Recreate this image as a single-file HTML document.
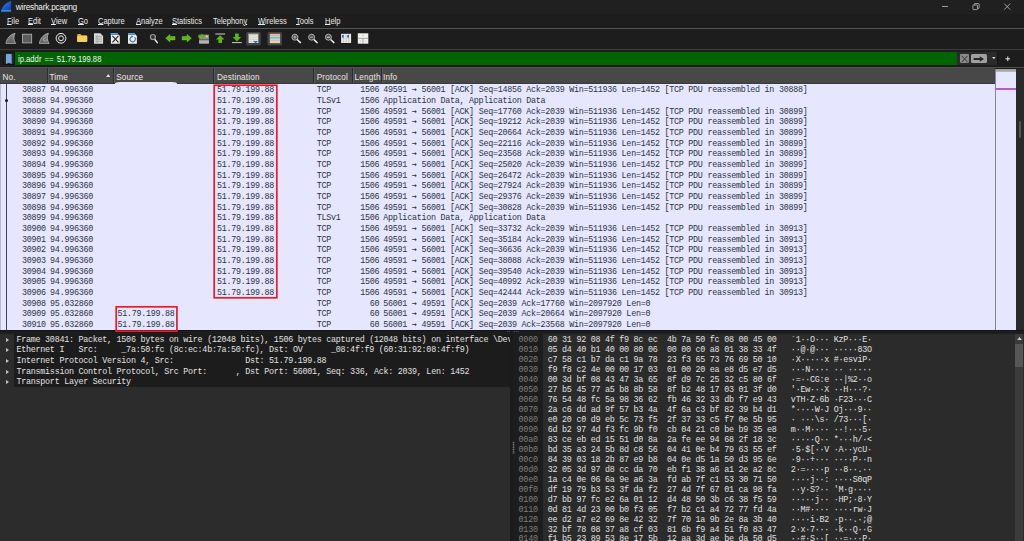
<!DOCTYPE html><html lang="en"><head><meta charset="utf-8"><title>wireshark.pcapng</title><style>
*{box-sizing:border-box;margin:0;padding:0}
html,body{width:1024px;height:541px;overflow:hidden;background:#1d1d1d}
body{position:relative;font-family:"Liberation Sans",sans-serif;font-size:8px;color:#e6e6e6}
.abs{position:absolute}
.m{font-family:"Liberation Mono",monospace;font-size:8.4px;letter-spacing:-0.2599px;white-space:pre}
#title{left:0;top:0;width:1024px;height:14px;background:#202020}
#title .t{left:15.8px;top:2.2px;font-size:8.3px;color:#f2f2f2;letter-spacing:-0.24px}
  .mi{top:17.2px;font-size:8.2px;color:#ececec;white-space:pre;transform:scaleX(0.915);transform-origin:0 0}
.mi u{text-decoration-thickness:0.6px;text-underline-offset:0.4px}
.hl{left:0;width:1024px;height:1px}
#hdr{left:0;top:67px;width:995px;height:16.6px;background:linear-gradient(#505050,#505050 0.9px,#484848 1.3px,#484848 15.4px,#3b3b3b 16px)}
.ht{top:5.7px;font-size:8.2px;letter-spacing:0.17px;color:#ebe9e0;white-space:pre}
.hs{top:1px;width:1px;height:15px;background:#2c2c2c;box-shadow:1px 0 0 #595959}
#plist{left:0;top:83.6px;width:995px;height:246.1px;background:#e7e6ff;overflow:hidden}
.r{left:0;width:995px;height:10.667px;color:#283442}
.r span{position:absolute;top:0;line-height:10.667px}
#detail{left:0;top:333.6px;width:510.3px;height:207.4px;background:#2c2c2c;overflow:hidden}
.dr{left:14px;width:500px;height:10.667px;color:#e2e2e2}
.dr span{position:absolute;left:2.5px;top:0;line-height:10.667px}
.tri{left:5.9px;width:0;height:0;border-left:3.4px solid #c4c4c4;border-top:2.7px solid transparent;border-bottom:2.7px solid transparent}
#bytes{left:513px;top:333.6px;width:511px;height:207.4px;background:#2b2b2b;overflow:hidden}
.br{left:0;width:503px;height:10px;color:#e0e0e0}
.br span{position:absolute;top:0;line-height:10px}
.r i{font-style:normal;font-family:"DejaVu Sans Mono","Liberation Mono",monospace;font-size:8px;display:inline-block;width:4.766px;letter-spacing:0;font-weight:bold}
.redbox{border:1.7px solid #ea1a26}
</style></head><body>
<div id="title" class="abs">
<svg class="abs" style="left:1.2px;top:1.2px" width="10.4" height="10.4" viewBox="0 -0.5 20 20"><defs><linearGradient id="fg" x1="0" y1="0" x2="1" y2="1"><stop offset="0" stop-color="#2f80ee"/><stop offset="1" stop-color="#0b3da6"/></linearGradient></defs><path d="M0 19.5C2.5 10 9 2 19.8-.5C19.2 6 19 13 19.6 19.5Z" fill="url(#fg)"/><path d="M0 19.5c.3-1 .6-1.700 .9-2.400H19.400l.2 2.400Z" fill="#4b9bf3"/></svg>
<div class="abs t">wireshark.pcapng</div>
<svg class="abs" style="left:940px;top:0" width="84" height="14" viewBox="0 0 84 14"><g stroke="#dcdcdc" stroke-width="0.65" fill="none"><path d="M2 6.5h6"/><rect x="32.9" y="5" width="4.6" height="4.6" rx="0.8"/><path d="M34.3 5V4.2q0-.6.6-.6h3.6q.6 0 .6.6v3.6q0 .6-.6.6h-.9"/><path d="M64.2 3.6l6 6M70.2 3.6l-6 6"/></g></svg>
</div>
<div class="abs mi" id="m_File" style="left:6.8px"><u>F</u>ile</div>
<div class="abs mi" id="m_Edit" style="left:28px"><u>E</u>dit</div>
<div class="abs mi" id="m_View" style="left:51px"><u>V</u>iew</div>
<div class="abs mi" id="m_Go" style="left:78px"><u>G</u>o</div>
<div class="abs mi" id="m_Capture" style="left:98px"><u>C</u>apture</div>
<div class="abs mi" id="m_Analyze" style="left:135.5px"><u>A</u>nalyze</div>
<div class="abs mi" id="m_Statistics" style="left:172px"><u>S</u>tatistics</div>
<div class="abs mi" id="m_Telephony" style="left:212.5px">Telephon<u>y</u></div>
<div class="abs mi" id="m_Wireless" style="left:258px"><u>W</u>ireless</div>
<div class="abs mi" id="m_Tools" style="left:296px"><u>T</u>ools</div>
<div class="abs mi" id="m_Help" style="left:324.7px"><u>H</u>elp</div>
<div class="abs hl" style="top:28px;background:#545454"></div>
<div class="abs hl" style="top:49.2px;background:#3c3c3c"></div>
<div id="tb" class="abs" style="left:0;top:29px;width:1024px;height:20px">
<svg class="abs" style="left:0;top:0" width="400" height="21" viewBox="0 29 400 21"><defs><linearGradient id="fing" x1="0" y1="0" x2="0" y2="1"><stop offset="0" stop-color="#8a8a8a"/><stop offset="1" stop-color="#5c5c5c"/></linearGradient></defs><path d="M15 33.3C10.4 34.4 6.9 38 5.9 43.4H15.7C13.5 40.4 13.5 36.4 15 33.3Z" fill="url(#fing)" stroke="#b2b2b2" stroke-width=".8"/><rect x="22.4" y="34.2" width="9.3" height="8.7" fill="#5c5c5c" stroke="#b6b6b6" stroke-width=".8"/><path d="M15 33.3C10.4 34.4 6.9 38 5.9 43.4H15.7C13.5 40.4 13.5 36.4 15 33.3Z" transform="translate(33.4 0)" fill="url(#fing)" stroke="#b2b2b2" stroke-width=".8"/><path d="M46.9 39.2a1.7 1.7 0 1 1-1.2-1.2" fill="none" stroke="#bdbdbd" stroke-width=".8"/><circle cx="61" cy="38.3" r="4.9" fill="#2a2a2a" stroke="#ececec" stroke-width="1"/><circle cx="61" cy="38.3" r="2.4" fill="#1e1e1e" stroke="#ececec" stroke-width=".95"/><path d="M77.2 35q0-.9.9-.9h2.4l1 1.1h4.8q.9 0 .9.9v5.1q0 .9-.9.9h-8.2q-.9 0-.9-.9Z" fill="#e9aa22"/><rect x="77.2" y="35.9" width="10" height="6.2" rx=".8" fill="#f6cf5e"/><path d="M94 33.3h6.3l2.8 2.8v7.6H94Z" fill="#d9d9d9"/><path d="M95.3 36.4h6.6M95.3 38.1h6.6M95.3 39.8h6.6M95.3 41.5h6.6M97 35v8" stroke="#8c8c8c" stroke-width=".55" fill="none"/><path d="M110.9 33.3h6.2l2.7 2.8v7.6h-8.9Z" fill="#efeee2"/><path d="M110.9 33.3h6.2l1 1v.8h-7.2Z" fill="#3b95e2"/><path d="M112.4 35.8l6 6.6M118.4 35.8l-6 6.6" stroke="#20242c" stroke-width="1.1"/><path d="M128 33.3h6.2l2.7 2.8v7.6H128Z" fill="#efeee2"/><path d="M128 33.3h6.2l1 1v.8H128Z" fill="#3b95e2"/><path d="M134.6 37.2a2.7 2.7 0 1 1-2.6-.7" fill="none" stroke="#3b74c4" stroke-width="1.15"/><path d="M131.4 35.2l2 1.3-2 1.5Z" fill="#3b74c4"/><path d="M154.6 39.2l2.7 3.4" stroke="#ececec" stroke-width="1.5" stroke-linecap="round"/><circle cx="152.9" cy="37" r="2.5" fill="#333" stroke="#9c9c9c" stroke-width="1.2"/><path d="M165.7 38.2L170 34.4V36.5H175V39.9H170V42Z" fill="#5db616" stroke="#93d653" stroke-width=".4"/><path d="M191.4 38.2L187.1 34.4V36.5H182.1V39.9H187.1V42Z" fill="#5db616" stroke="#93d653" stroke-width=".4"/><rect x="199.2" y="34.6" width="9.7" height="8.9" fill="#8f8f8f"/><rect x="199.2" y="40.2" width="9.7" height="3.3" fill="#b4b4b4"/><rect x="199.2" y="39.3" width="9.7" height=".9" fill="#555"/><path d="M198.2 35.3h3.3v-1.7l3.3 2.8-3.3 2.8v-1.7h-3.3Z" fill="#5db616"/><circle cx="206.9" cy="36.5" r="1" fill="#f2e24e"/><rect x="215.3" y="33.5" width="9.8" height="1" fill="#cfcfcf"/><path d="M220.2 35.3L224.5 39.6H222V43H218.4V39.6H215.9Z" fill="#5db616"/><rect x="232" y="42.1" width="9.8" height="1" fill="#cfcfcf"/><path d="M236.9 41.4L241.2 37.1H238.7V33.6H235.1V37.1H232.6Z" fill="#5db616"/><rect x="246.1" y="31.9" width="14.7" height="13.7" rx="1.6" fill="#434343"/><rect x="248.6" y="33.8" width="9.7" height="9.2" fill="#e6e6dc"/><rect x="248.6" y="33.8" width="9.7" height="1.3" fill="#c4c4bc"/><path d="M248.6 37.2h9.7M248.6 39.4h9.7M248.6 41.4h9.7" stroke="#c2c2ba" stroke-width=".5"/><path d="M253 41h5.2l-2.6 2.2Z" fill="#2868d2"/><rect x="267.4" y="31.9" width="14.6" height="13.7" rx="1.6" fill="#434343"/><rect x="269.8" y="33.8" width="10.3" height="2" fill="#f0b6c0"/><rect x="269.8" y="35.8" width="10.3" height="1.7" fill="#b6e6a2"/><rect x="269.8" y="37.5" width="10.3" height="1.6" fill="#a2c6f0"/><rect x="269.8" y="39.1" width="10.3" height="1.7" fill="#d4dcf4"/><rect x="269.8" y="40.8" width="10.3" height="2.4" fill="#e8d898"/><path d="M297.09999999999997 39.5l3.3 3.1" stroke="#ececec" stroke-width="1.5" stroke-linecap="round"/><circle cx="294.9" cy="37.2" r="3" fill="#4a4a4a" stroke="#bdbdbd" stroke-width=".9"/><path d="M293.4 37.2h3M294.9 35.7v3" stroke="#d8d8d8" stroke-width=".7"/><path d="M313.8 39.5l3.3 3.1" stroke="#ececec" stroke-width="1.5" stroke-linecap="round"/><circle cx="311.6" cy="37.2" r="3" fill="#4a4a4a" stroke="#bdbdbd" stroke-width=".9"/><path d="M310.1 37.2h3" stroke="#d8d8d8" stroke-width=".7"/><path d="M330.59999999999997 39.5l3.3 3.1" stroke="#ececec" stroke-width="1.5" stroke-linecap="round"/><circle cx="328.4" cy="37.2" r="3" fill="#4a4a4a" stroke="#bdbdbd" stroke-width=".9"/><path d="M326.79999999999995 37.2h3.2" stroke="#d8d8d8" stroke-width="1.1"/><rect x="341.1" y="33.8" width="10" height="9.2" fill="#e9e9e1"/><path d="M346.1 33.8v9.2M343.6 33.8v9.2M348.7 33.8v9.2" stroke="#a8a8a0" stroke-width=".5"/><rect x="342" y="35" width="1.7" height="2.7" fill="#2868d2"/><rect x="347.3" y="35" width="1.7" height="2.7" fill="#2868d2"/><rect x="357.8" y="33.3" width="10.5" height="10.4" fill="#f0f0ee"/><path d="M357.8 38.4h10.5M363 38.4v5.3" stroke="#8c8c8c" stroke-width=".7"/><path d="M362 35.6h2M360 41h1.2M365 41h1.2" stroke="#aaa" stroke-width=".6"/></svg>
</div>
<div class="abs" style="left:3px;top:51.5px;width:995px;height:13.8px;background:#131313;border-radius:1.5px"></div>
<div class="abs" style="left:4px;top:52.6px;width:10.2px;height:11.6px;background:#262626;border-radius:1.2px"></div>
<div class="abs" style="left:15px;top:52.4px;width:942px;height:12.4px;background:#006400"></div>
<svg class="abs" style="left:6px;top:53.7px" width="5.7" height="10" viewBox="0 0 5.4 9.6" preserveAspectRatio="none"><path d="M0 .6Q0 0 .6 0H4.8Q5.4 0 5.4.6V9.6L2.7 8.3 0 9.6Z" fill="#76a6e2"/></svg>
<div class="abs" id="ftext" style="left:17.5px;top:54.3px;font-size:8.4px;color:#f4f4f4;white-space:pre;word-spacing:1.1px;transform:scaleX(0.915);transform-origin:0 0">ip.addr == 51.79.199.88</div>
<div class="abs" style="left:957px;top:52.4px;width:40.2px;height:12.2px;background:#2b2b2b;border-radius:0 1.2px 1.2px 0"></div>
<div class="abs" style="left:959.6px;top:54.2px;width:9.2px;height:8.8px;background:#8a8a8a;border-radius:1px"></div>
<svg class="abs" style="left:959.6px;top:53.6px" width="9.2" height="10" viewBox="0 0 9.2 10"><path d="M1.6 1.8l6 6.4M7.6 1.8l-6 6.4" stroke="#2a2a2a" stroke-width="0.9"/></svg>
<div class="abs" style="left:971px;top:54.2px;width:15.6px;height:8.8px;background:#a0a0a0;border-radius:1.5px"></div>
<svg class="abs" style="left:971px;top:53.6px" width="15.6" height="10" viewBox="0 0 15.6 10"><path d="M2.6 4h6.2V2.2L13 5 8.8 7.8V6H2.6Z" fill="#262626"/></svg>
<svg class="abs" style="left:992.2px;top:57.4px" width="3.6" height="2.4" viewBox="0 0 5 3"><path d="M0 0h5L2.5 3Z" fill="#cfcfcf"/></svg>
<svg class="abs" style="left:1004.6px;top:56px" width="5.6" height="5.6" viewBox="0 0 7 7"><path d="M3.5 .6v5.8M.6 3.5h5.8" stroke="#f0f0f0" stroke-width="1.2"/></svg>
<div class="abs hl" style="top:67.2px;background:#4e4e4e"></div>
<div id="hdr" class="abs">
<div class="abs ht" id="h_No" style="left:2.4px">No.</div>
<div class="abs ht" id="h_Time" style="left:49.5px">Time</div>
<div class="abs ht" id="h_Source" style="left:116.2px">Source</div>
<div class="abs ht" id="h_Destination" style="left:216.9px">Destination</div>
<div class="abs ht" id="h_Protocol" style="left:316.7px">Protocol</div>
<div class="abs ht" id="h_Length" style="left:354.6px">Length</div>
<div class="abs ht" id="h_Info" style="left:383px">Info</div>
<div class="abs hs" style="left:46.6px"></div>
<div class="abs hs" style="left:113.2px"></div>
<div class="abs hs" style="left:213.4px"></div>
<div class="abs hs" style="left:313.3px"></div>
<div class="abs hs" style="left:351.8px"></div>
<div class="abs hs" style="left:380.6px"></div>
<svg class="abs" style="left:106.3px;top:7px" width="4.4" height="3.4" viewBox="0 0 4.4 3.4"><path d="M0 3.4L2.2 0 4.4 3.4Z" fill="#e8e8e8"/></svg>
</div>
<div id="plist" class="abs">
<div class="abs" style="left:0;top:0;width:1px;height:246px;background:#b9b8d0"></div>
<div class="abs" style="left:5.8px;top:0;width:0.8px;height:246px;background:#44444f"></div>
<div class="abs" style="left:4.7px;top:15.2px;width:3.2px;height:3.2px;border-radius:50%;background:#15151c"></div>
<div class="abs r m" style="top:1.65px"><span style="left:21.97px">30887</span><span style="left:50.1px">94.996360</span><span style="left:216.9px">51.79.199.88</span><span style="left:316.7px">TCP</span><span style="left:360.14px">1506</span><span style="left:383.3px">49591 <i>→</i> 56001 [ACK] Seq=14856 Ack=2039 Win=511936 Len=1452 [TCP PDU reassembled in 30888]</span></div>
<div class="abs r m" style="top:12.32px"><span style="left:21.97px">30888</span><span style="left:50.1px">94.996360</span><span style="left:216.9px">51.79.199.88</span><span style="left:316.7px">TLSv1</span><span style="left:360.14px">1506</span><span style="left:383.3px">Application Data, Application Data</span></div>
<div class="abs r m" style="top:22.98px"><span style="left:21.97px">30889</span><span style="left:50.1px">94.996360</span><span style="left:216.9px">51.79.199.88</span><span style="left:316.7px">TCP</span><span style="left:360.14px">1506</span><span style="left:383.3px">49591 <i>→</i> 56001 [ACK] Seq=17760 Ack=2039 Win=511936 Len=1452 [TCP PDU reassembled in 30899]</span></div>
<div class="abs r m" style="top:33.65px"><span style="left:21.97px">30890</span><span style="left:50.1px">94.996360</span><span style="left:216.9px">51.79.199.88</span><span style="left:316.7px">TCP</span><span style="left:360.14px">1506</span><span style="left:383.3px">49591 <i>→</i> 56001 [ACK] Seq=19212 Ack=2039 Win=511936 Len=1452 [TCP PDU reassembled in 30899]</span></div>
<div class="abs r m" style="top:44.32px"><span style="left:21.97px">30891</span><span style="left:50.1px">94.996360</span><span style="left:216.9px">51.79.199.88</span><span style="left:316.7px">TCP</span><span style="left:360.14px">1506</span><span style="left:383.3px">49591 <i>→</i> 56001 [ACK] Seq=20664 Ack=2039 Win=511936 Len=1452 [TCP PDU reassembled in 30899]</span></div>
<div class="abs r m" style="top:54.99px"><span style="left:21.97px">30892</span><span style="left:50.1px">94.996360</span><span style="left:216.9px">51.79.199.88</span><span style="left:316.7px">TCP</span><span style="left:360.14px">1506</span><span style="left:383.3px">49591 <i>→</i> 56001 [ACK] Seq=22116 Ack=2039 Win=511936 Len=1452 [TCP PDU reassembled in 30899]</span></div>
<div class="abs r m" style="top:65.65px"><span style="left:21.97px">30893</span><span style="left:50.1px">94.996360</span><span style="left:216.9px">51.79.199.88</span><span style="left:316.7px">TCP</span><span style="left:360.14px">1506</span><span style="left:383.3px">49591 <i>→</i> 56001 [ACK] Seq=23568 Ack=2039 Win=511936 Len=1452 [TCP PDU reassembled in 30899]</span></div>
<div class="abs r m" style="top:76.32px"><span style="left:21.97px">30894</span><span style="left:50.1px">94.996360</span><span style="left:216.9px">51.79.199.88</span><span style="left:316.7px">TCP</span><span style="left:360.14px">1506</span><span style="left:383.3px">49591 <i>→</i> 56001 [ACK] Seq=25020 Ack=2039 Win=511936 Len=1452 [TCP PDU reassembled in 30899]</span></div>
<div class="abs r m" style="top:86.99px"><span style="left:21.97px">30895</span><span style="left:50.1px">94.996360</span><span style="left:216.9px">51.79.199.88</span><span style="left:316.7px">TCP</span><span style="left:360.14px">1506</span><span style="left:383.3px">49591 <i>→</i> 56001 [ACK] Seq=26472 Ack=2039 Win=511936 Len=1452 [TCP PDU reassembled in 30899]</span></div>
<div class="abs r m" style="top:97.65px"><span style="left:21.97px">30896</span><span style="left:50.1px">94.996360</span><span style="left:216.9px">51.79.199.88</span><span style="left:316.7px">TCP</span><span style="left:360.14px">1506</span><span style="left:383.3px">49591 <i>→</i> 56001 [ACK] Seq=27924 Ack=2039 Win=511936 Len=1452 [TCP PDU reassembled in 30899]</span></div>
<div class="abs r m" style="top:108.32px"><span style="left:21.97px">30897</span><span style="left:50.1px">94.996360</span><span style="left:216.9px">51.79.199.88</span><span style="left:316.7px">TCP</span><span style="left:360.14px">1506</span><span style="left:383.3px">49591 <i>→</i> 56001 [ACK] Seq=29376 Ack=2039 Win=511936 Len=1452 [TCP PDU reassembled in 30899]</span></div>
<div class="abs r m" style="top:118.99px"><span style="left:21.97px">30898</span><span style="left:50.1px">94.996360</span><span style="left:216.9px">51.79.199.88</span><span style="left:316.7px">TCP</span><span style="left:360.14px">1506</span><span style="left:383.3px">49591 <i>→</i> 56001 [ACK] Seq=30828 Ack=2039 Win=511936 Len=1452 [TCP PDU reassembled in 30899]</span></div>
<div class="abs r m" style="top:129.65px"><span style="left:21.97px">30899</span><span style="left:50.1px">94.996360</span><span style="left:216.9px">51.79.199.88</span><span style="left:316.7px">TLSv1</span><span style="left:360.14px">1506</span><span style="left:383.3px">Application Data, Application Data</span></div>
<div class="abs r m" style="top:140.32px"><span style="left:21.97px">30900</span><span style="left:50.1px">94.996360</span><span style="left:216.9px">51.79.199.88</span><span style="left:316.7px">TCP</span><span style="left:360.14px">1506</span><span style="left:383.3px">49591 <i>→</i> 56001 [ACK] Seq=33732 Ack=2039 Win=511936 Len=1452 [TCP PDU reassembled in 30913]</span></div>
<div class="abs r m" style="top:150.99px"><span style="left:21.97px">30901</span><span style="left:50.1px">94.996360</span><span style="left:216.9px">51.79.199.88</span><span style="left:316.7px">TCP</span><span style="left:360.14px">1506</span><span style="left:383.3px">49591 <i>→</i> 56001 [ACK] Seq=35184 Ack=2039 Win=511936 Len=1452 [TCP PDU reassembled in 30913]</span></div>
<div class="abs r m" style="top:161.66px"><span style="left:21.97px">30902</span><span style="left:50.1px">94.996360</span><span style="left:216.9px">51.79.199.88</span><span style="left:316.7px">TCP</span><span style="left:360.14px">1506</span><span style="left:383.3px">49591 <i>→</i> 56001 [ACK] Seq=36636 Ack=2039 Win=511936 Len=1452 [TCP PDU reassembled in 30913]</span></div>
<div class="abs r m" style="top:172.32px"><span style="left:21.97px">30903</span><span style="left:50.1px">94.996360</span><span style="left:216.9px">51.79.199.88</span><span style="left:316.7px">TCP</span><span style="left:360.14px">1506</span><span style="left:383.3px">49591 <i>→</i> 56001 [ACK] Seq=38088 Ack=2039 Win=511936 Len=1452 [TCP PDU reassembled in 30913]</span></div>
<div class="abs r m" style="top:182.99px"><span style="left:21.97px">30904</span><span style="left:50.1px">94.996360</span><span style="left:216.9px">51.79.199.88</span><span style="left:316.7px">TCP</span><span style="left:360.14px">1506</span><span style="left:383.3px">49591 <i>→</i> 56001 [ACK] Seq=39540 Ack=2039 Win=511936 Len=1452 [TCP PDU reassembled in 30913]</span></div>
<div class="abs r m" style="top:193.66px"><span style="left:21.97px">30905</span><span style="left:50.1px">94.996360</span><span style="left:216.9px">51.79.199.88</span><span style="left:316.7px">TCP</span><span style="left:360.14px">1506</span><span style="left:383.3px">49591 <i>→</i> 56001 [ACK] Seq=40992 Ack=2039 Win=511936 Len=1452 [TCP PDU reassembled in 30913]</span></div>
<div class="abs r m" style="top:204.32px"><span style="left:21.97px">30906</span><span style="left:50.1px">94.996360</span><span style="left:216.9px">51.79.199.88</span><span style="left:316.7px">TCP</span><span style="left:360.14px">1506</span><span style="left:383.3px">49591 <i>→</i> 56001 [ACK] Seq=42444 Ack=2039 Win=511936 Len=1452 [TCP PDU reassembled in 30913]</span></div>
<div class="abs r m" style="top:214.99px"><span style="left:21.97px">30908</span><span style="left:50.1px">95.032860</span><span style="left:316.7px">TCP</span><span style="left:369.67px">60</span><span style="left:383.3px">56001 <i>→</i> 49591 [ACK] Seq=2039 Ack=17760 Win=2097920 Len=0</span></div>
<div class="abs r m" style="top:225.66px"><span style="left:21.97px">30909</span><span style="left:50.1px">95.032860</span><span style="left:117.4px">51.79.199.88</span><span style="left:316.7px">TCP</span><span style="left:369.67px">60</span><span style="left:383.3px">56001 <i>→</i> 49591 [ACK] Seq=2039 Ack=20664 Win=2097920 Len=0</span></div>
<div class="abs r m" style="top:236.32px"><span style="left:21.97px">30910</span><span style="left:50.1px">95.032860</span><span style="left:117.4px">51.79.199.88</span><span style="left:316.7px">TCP</span><span style="left:369.67px">60</span><span style="left:383.3px">56001 <i>→</i> 49591 [ACK] Seq=2039 Ack=23568 Win=2097920 Len=0</span></div>
</div>
<div class="abs" style="left:995px;top:69px;width:0.8px;height:260.7px;background:#85858e"></div>
<div class="abs" style="left:995.8px;top:69.2px;width:20.1px;height:260.5px;background:linear-gradient(#9a9a9a,#bcbcbc 3px,#e7e6ff 3.5px,#e7e6ff)"></div>
<div class="abs" style="left:995.8px;top:87.9px;width:20.1px;height:2px;background:#b95cca"></div>
<div class="abs" style="left:1015.9px;top:68.5px;width:8.1px;height:261.2px;background:#2a2a2a"></div>
<div class="abs" style="left:1019px;top:121px;width:2px;height:17px;background:#555;border-radius:1px"></div>
<div class="abs" style="left:114.8px;top:82px;width:62.4px;height:3px;background:#e7e6ff;border-radius:5px 5px 0 0/1.8px 1.8px 0 0"></div>
<div class="abs" style="left:0;top:329.7px;width:1024px;height:1.3px;background:#141414"></div>
<svg class="abs" style="left:506px;top:330px" width="14" height="3" viewBox="0 0 14 3"><path d="M1.2 1.6h12" stroke="#5c5c5c" stroke-width="0.9" stroke-dasharray="1 0.75"/></svg>
<div id="detail" class="abs">
<div class="abs" style="left:14px;top:0;width:500px;height:53px;background:#1c1c1c"></div>
<div class="abs tri" style="top:4.00px"></div>
<div class="abs dr m" style="top:1.20px"><span>Frame 30841: Packet, 1506 bytes on wire (12048 bits), 1506 bytes captured (12048 bits) on interface \Dev</span></div>
<div class="abs tri" style="top:14.67px"></div>
<div class="abs dr m" style="top:11.87px"><span>Ethernet I   Src:     _7a:50:fc (8c:ec:4b:7a:50:fc), Dst: OV      _08:4f:f9 (60:31:92:08:4f:f9)</span></div>
<div class="abs tri" style="top:25.33px"></div>
<div class="abs dr m" style="top:22.53px"><span>Internet Protocol Version 4, Src:               Dst: 51.79.199.88</span></div>
<div class="abs tri" style="top:36.00px"></div>
<div class="abs dr m" style="top:33.20px"><span>Transmission Control Protocol, Src Port:      , Dst Port: 56001, Seq: 336, Ack: 2039, Len: 1452</span></div>
<div class="abs tri" style="top:46.67px"></div>
<div class="abs dr m" style="top:43.87px"><span>Transport Layer Security</span></div>
</div>
<div class="abs" style="left:510.3px;top:330.5px;width:3px;height:211px;background:#1b1b1b"></div>
<div id="bytes" class="abs">
<div class="abs" style="left:0;top:0;width:29.6px;height:208px;background:#1d1d1d"></div>
<div class="abs br m" style="top:1.60px"><span style="left:5.6px;color:#7d7d7d">0000</span><span style="left:34.8px">60 31 92 08 4f f9 8c ec  4b 7a 50 fc 08 00 45 00</span><span style="left:277.87px">`1··O··· KzP···E·</span></div>
<div class="abs br m" style="top:11.56px"><span style="left:5.6px;color:#7d7d7d">0010</span><span style="left:34.8px">05 d4 40 b1 40 00 80 06  00 00 c0 a8 01 38 33 4f</span><span style="left:277.87px">··@·@··· ·····83O</span></div>
<div class="abs br m" style="top:21.53px"><span style="left:5.6px;color:#7d7d7d">0020</span><span style="left:34.8px">c7 58 c1 b7 da c1 9a 78  23 f3 65 73 76 69 50 10</span><span style="left:277.87px">·X·····x #·esviP·</span></div>
<div class="abs br m" style="top:31.50px"><span style="left:5.6px;color:#7d7d7d">0030</span><span style="left:34.8px">f9 f8 c2 4e 00 00 17 03  01 00 20 ea e8 d5 e7 d5</span><span style="left:277.87px">···N···· ·· ·····</span></div>
<div class="abs br m" style="top:41.46px"><span style="left:5.6px;color:#7d7d7d">0040</span><span style="left:34.8px">00 3d bf 08 43 47 3a 65  8f d9 7c 25 32 c5 80 6f</span><span style="left:277.87px">·=··CG:e ··|%2··o</span></div>
<div class="abs br m" style="top:51.43px"><span style="left:5.6px;color:#7d7d7d">0050</span><span style="left:34.8px">27 b5 45 77 a5 b8 8b 58  8f b2 48 17 03 01 3f d0</span><span style="left:277.87px">'·Ew···X ··H···?·</span></div>
<div class="abs br m" style="top:61.39px"><span style="left:5.6px;color:#7d7d7d">0060</span><span style="left:34.8px">76 54 48 fc 5a 98 36 62  fb 46 32 33 db f7 e9 43</span><span style="left:277.87px">vTH·Z·6b ·F23···C</span></div>
<div class="abs br m" style="top:71.35px"><span style="left:5.6px;color:#7d7d7d">0070</span><span style="left:34.8px">2a c6 dd ad 9f 57 b3 4a  4f 6a c3 bf 82 39 b4 d1</span><span style="left:277.87px">*····W·J Oj···9··</span></div>
<div class="abs br m" style="top:81.32px"><span style="left:5.6px;color:#7d7d7d">0080</span><span style="left:34.8px">e0 20 c0 d9 eb 5c 73 f5  2f 37 33 c5 f7 0e 5b 95</span><span style="left:277.87px">· ···\s· /73···[·</span></div>
<div class="abs br m" style="top:91.28px"><span style="left:5.6px;color:#7d7d7d">0090</span><span style="left:34.8px">6d b2 97 4d f3 fc 9b f0  cb 04 21 c0 be b9 35 e8</span><span style="left:277.87px">m··M···· ··!···5·</span></div>
<div class="abs br m" style="top:101.25px"><span style="left:5.6px;color:#7d7d7d">00a0</span><span style="left:34.8px">83 ce eb ed 15 51 d0 8a  2a fe ee 94 68 2f 18 3c</span><span style="left:277.87px">·····Q·· *···h/·&lt;</span></div>
<div class="abs br m" style="top:111.21px"><span style="left:5.6px;color:#7d7d7d">00b0</span><span style="left:34.8px">bd 35 a3 24 5b 8d c8 56  04 41 0e b4 79 63 55 ef</span><span style="left:277.87px">·5·$[··V ·A··ycU·</span></div>
<div class="abs br m" style="top:121.18px"><span style="left:5.6px;color:#7d7d7d">00c0</span><span style="left:34.8px">84 39 03 18 2b 87 e9 b8  04 0e d5 1a 50 d3 95 6e</span><span style="left:277.87px">·9··+··· ····P··n</span></div>
<div class="abs br m" style="top:131.14px"><span style="left:5.6px;color:#7d7d7d">00d0</span><span style="left:34.8px">32 05 3d 97 d8 cc da 70  eb f1 38 a6 a1 2e a2 8c</span><span style="left:277.87px">2·=····p ··8··.··</span></div>
<div class="abs br m" style="top:141.11px"><span style="left:5.6px;color:#7d7d7d">00e0</span><span style="left:34.8px">1a c4 0e 06 6a 9e a6 3a  fd ab 7f c1 53 30 71 50</span><span style="left:277.87px">····j··: ····S0qP</span></div>
<div class="abs br m" style="top:151.07px"><span style="left:5.6px;color:#7d7d7d">00f0</span><span style="left:34.8px">df 19 79 b3 53 3f da f2  27 4d 7f 67 01 ca 98 fa</span><span style="left:277.87px">··y·S?·· 'M·g····</span></div>
<div class="abs br m" style="top:161.04px"><span style="left:5.6px;color:#7d7d7d">0100</span><span style="left:34.8px">d7 bb 97 fc e2 6a 01 12  d4 48 50 3b c6 38 f5 59</span><span style="left:277.87px">·····j·· ·HP;·8·Y</span></div>
<div class="abs br m" style="top:171.00px"><span style="left:5.6px;color:#7d7d7d">0110</span><span style="left:34.8px">0d 81 4d 23 00 b0 f3 05  f7 b2 c1 a4 72 77 fd 4a</span><span style="left:277.87px">··M#···· ····rw·J</span></div>
<div class="abs br m" style="top:180.97px"><span style="left:5.6px;color:#7d7d7d">0120</span><span style="left:34.8px">ee d2 a7 e2 69 8e 42 32  7f 70 1a 9b 2e 8a 3b 40</span><span style="left:277.87px">····i·B2 ·p··.·;@</span></div>
<div class="abs br m" style="top:190.94px"><span style="left:5.6px;color:#7d7d7d">0130</span><span style="left:34.8px">32 bf 78 08 37 a8 cf 03  81 6b f9 a4 51 f0 83 47</span><span style="left:277.87px">2·x·7··· ·k··Q··G</span></div>
<div class="abs br m" style="top:200.90px"><span style="left:5.6px;color:#7d7d7d">0140</span><span style="left:34.8px">f1 b5 23 89 53 8e 17 5b  12 aa 3d ae be da 50 d5</span><span style="left:277.87px">··#·S··[ ··=···P·</span></div>
<div class="abs" style="left:502.1px;top:0;width:8.4px;height:208px;background:#3b3b3b"></div>
<div class="abs" style="left:502.1px;top:10px;width:8.4px;height:23px;background:#565656"></div>
<svg class="abs" style="left:503.8px;top:3.4px" width="5" height="3.2" viewBox="0 0 5 3.2"><path d="M0 3.2L2.5 0 5 3.2Z" fill="#d0d0d0"/></svg>
</div>
<svg class="abs" style="left:100px;top:80px" width="200" height="260" viewBox="100 80 200 260"><g fill="none" stroke="#ea1a26" stroke-width="1.7"><rect x="214.2" y="85.2" width="62.6" height="212.6"/><rect x="116.2" y="306.8" width="60.7" height="24.4"/></g></svg>
<svg class="abs" style="left:511.6px;top:441px" width="3" height="14" viewBox="0 0 3 14"><path d="M1.5 1v12" stroke="#858585" stroke-width="1.6" stroke-dasharray="1 0.75"/></svg>
</body></html>
